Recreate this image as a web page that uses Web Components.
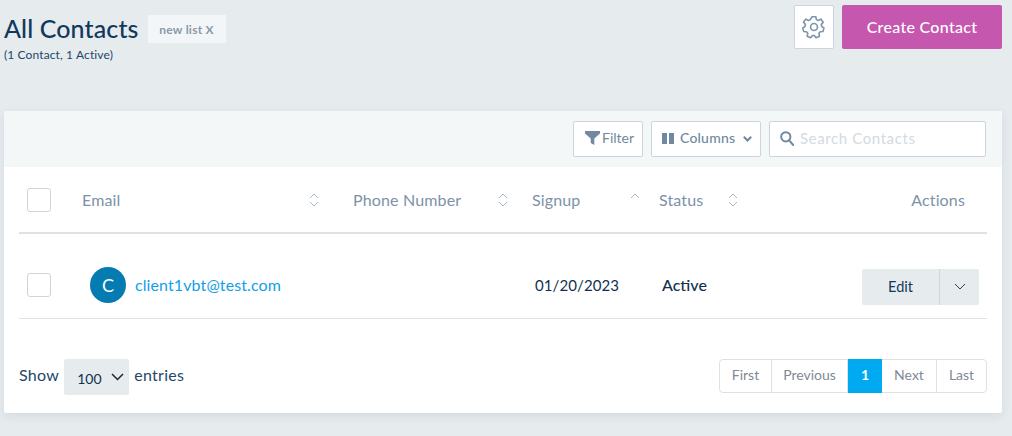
<!DOCTYPE html>
<html>
<head>
<meta charset="utf-8">
<title>All Contacts</title>
<style>
  html, body { margin: 0; height: 100%; }
  body { background: #e6ebee; font-family: "Lato", "Open Sans", sans-serif; overflow: hidden; }
</style>
</head>
<body>
<contacts-page>
  <page-header slot="header"></page-header>
  <contacts-card>
    <contacts-toolbar slot="toolbar"></contacts-toolbar>
    <contacts-table slot="table"></contacts-table>
    <contacts-footer slot="footer"></contacts-footer>
  </contacts-card>
</contacts-page>

<script>
const font = '"Lato", "Open Sans", sans-serif';

class ContactsPage extends HTMLElement {
  constructor() {
    super();
    this.attachShadow({mode: 'open'});
    this.shadowRoot.innerHTML = `
      <style>
        :host { display: block; width: 1012px; height: 436px; box-sizing: border-box; padding: 5px 10px 0 4px; }
      </style>
      <slot name="header"></slot>
      <slot></slot>
    `;
  }
}

class PageHeader extends HTMLElement {
  constructor() {
    super();
    this.attachShadow({mode: 'open'});
    this.shadowRoot.innerHTML = `
      <style>
        :host { display: flex; justify-content: space-between; align-items: flex-start; height: 106px; font-family: ${font}; }
        .title { display: flex; align-items: center; gap: 9px; margin-top: 10px; height: 28px; }
        h1 { margin: 0 0 2px; font-size: 25px; font-weight: 500; color: #12385b; line-height: 26px; letter-spacing: .12px; }
        .badge { width: 78px; height: 28px; display: flex; align-items: center; justify-content: center; background: #f3f6f8; color: #8a99a9; font-size: 12px; font-weight: 700; letter-spacing: .25px; }
        .sub { margin-top: 5px; font-size: 12px; line-height: 14px; color: #23476a; letter-spacing: .12px; }
        .right { display: flex; gap: 8px; }
        .gear { width: 40px; height: 44px; box-sizing: border-box; background: #fff; border: 1px solid #ccd5de; border-radius: 2px; display: flex; align-items: center; justify-content: center; }
        .create { width: 160px; height: 44px; box-sizing: border-box; padding-bottom: 2px; border-radius: 2px; background: #c657af; color: #fff; font-size: 16px; font-weight: 500; letter-spacing: .3px; display: flex; align-items: center; justify-content: center; }
      </style>
      <div>
        <div class="title"><h1>All Contacts</h1><span class="badge">new list X</span></div>
        <div class="sub">(1 Contact, 1 Active)</div>
      </div>
      <div class="right">
        <div class="gear">
          <svg width="26" height="26" viewBox="0 0 24 24" fill="none" stroke="#7f95ab" stroke-width="1.5" stroke-linejoin="round">
            <circle cx="12" cy="12" r="3.2"/>
            <path d="M10.3 2.5h3.4l.5 2.7 1.7.8 2.4-1.3 2.2 2.9-1.7 2 .3 1.9 2.1 1.3-.9 3.4-2.6.2-1.2 1.5.6 2.6-3.2 1.4-1.6-2.1h-1.8l-1.6 2.1-3.2-1.4.6-2.6-1.2-1.5-2.6-.2-.9-3.4 2.1-1.3.3-1.9-1.7-2 2.2-2.9 2.4 1.3 1.7-.8z"/>
          </svg>
        </div>
        <div class="create">Create Contact</div>
      </div>
    `;
  }
}

class ContactsCard extends HTMLElement {
  constructor() {
    super();
    this.attachShadow({mode: 'open'});
    this.shadowRoot.innerHTML = `
      <style>
        :host { display: block; width: 998px; height: 302px; background: #fff; border-radius: 2px; box-shadow: 0 3px 10px rgba(60,80,100,.1); font-family: ${font}; }
      </style>
      <slot name="toolbar"></slot>
      <slot name="table"></slot>
      <slot name="footer"></slot>
    `;
  }
}

class ContactsToolbar extends HTMLElement {
  constructor() {
    super();
    this.attachShadow({mode: 'open'});
    this.shadowRoot.innerHTML = `
      <style>
        :host { display: flex; justify-content: flex-end; align-items: center; gap: 8px; height: 56px; box-sizing: border-box; padding: 0 16px 0 0; background: #f3f7f8; border-radius: 2px 2px 0 0; }
        .box { height: 36px; box-sizing: border-box; background: #fff; border: 1px solid #ccd5de; border-radius: 2px; display: flex; align-items: center; color: #7089a1; font-size: 14px; }
        .box span { margin-top: -3px; }
        .filter { width: 70px; padding-left: 11px; gap: 2px; }
        .columns { width: 110px; padding-left: 10px; font-weight: 500; gap: 6px; letter-spacing: .2px; }
        .search { width: 217px; padding-left: 10px; gap: 6px; color: #d3dae1; font-size: 15px; letter-spacing: .6px; }
        .columns svg { margin-top: -1px; }
        .columns svg:last-child { margin-left: 2px; }
        .filter svg, .search svg { margin-top: -2px; }
      </style>
      <div class="box filter">
        <svg width="15" height="14" viewBox="0 0 15 14"><path fill="#7089a1" d="M0 0h15v2.4L9.3 7.4V14L5.7 12V7.4L0 2.4z"/></svg>
        <span>Filter</span>
      </div>
      <div class="box columns">
        <svg width="12" height="11" viewBox="0 0 12 11"><path fill="#7089a1" d="M0 0h5v11H0zM7 0h5v11H7z"/></svg>
        <span>Columns</span>
        <svg width="9" height="6" viewBox="0 0 9 6"><path fill="none" stroke="#7089a1" stroke-width="2" d="M.8.8l3.7 3.7L8.2.8"/></svg>
      </div>
      <div class="box search">
        <svg width="14" height="15" viewBox="0 0 14 15" fill="none" stroke="#7089a1" stroke-width="2"><circle cx="5.8" cy="5.8" r="4.6"/><path d="M9 9.2l4.2 4.8" stroke-linecap="round"/></svg>
        <span>Search Contacts</span>
      </div>
    `;
  }
}

const sortBoth = `<svg width="10" height="14" viewBox="0 0 10 14" fill="none" stroke="#a9b6c3" stroke-width="1"><path d="M1 5l4-4 4 4M1 9l4 4 4-4"/></svg>`;
const sortUp = `<svg width="10" height="14" viewBox="0 0 10 14" fill="none" stroke="#a9b6c3" stroke-width="1"><path d="M1 5l4-4 4 4"/></svg>`;

class ContactsTable extends HTMLElement {
  constructor() {
    super();
    this.attachShadow({mode: 'open'});
    this.shadowRoot.innerHTML = `
      <style>
        :host { display: block; margin: 0 15px; }
        .row { display: grid; grid-template-columns: 48px 271px 179px 127px 1fr 122px; align-items: center; }
        .head { height: 67px; box-sizing: border-box; border-bottom: 2px solid #dfe1e3; color: #7d92a8; font-size: 16px; letter-spacing: .15px; }
        .body { height: 85px; box-sizing: border-box; padding-top: 17px; border-bottom: 1px solid #dfe1e3; color: #12304f; font-size: 16px; }
        .check { width: 24px; height: 24px; box-sizing: border-box; margin-left: 8px; background: #fff; border: 1px solid #ccd5de; border-radius: 3px; }
        .th { display: flex; justify-content: space-between; align-items: center; padding-left: 15px; }
        .th.email { padding-right: 19px; }
        .th.phone { padding-right: 9px; }
        .th.signup { padding-right: 4px; }
        .th.status { justify-content: flex-start; gap: 25px; }
        .actions-head { text-align: right; padding-right: 22px; }
        .who { display: flex; align-items: center; gap: 9px; padding-left: 23px; }
        .avatar { width: 36px; height: 36px; border-radius: 50%; background: #057cb1; color: #fff; display: flex; align-items: center; justify-content: center; font-size: 18px; }
        a { color: #11a0e8; text-decoration: none; font-size: 16px; letter-spacing: .1px; }
        .date { padding-left: 18px; font-size: 15px; letter-spacing: .1px; }
        .active { padding-left: 18px; font-weight: 500; letter-spacing: 0; }
        .split { display: flex; height: 36px; width: 117px; margin: 4px 0 0 -3px; background: #e6ebee; border-radius: 2px; font-size: 14.5px; color: #12385b; }
        .edit { width: 78px; padding-bottom: 1px; box-sizing: border-box; display: flex; align-items: center; justify-content: center; border-right: 1px solid #d0d6dc; }
        .caret { flex: 1; display: flex; align-items: center; justify-content: center; }
      </style>
      <div class="row head">
        <div class="check"></div>
        <div class="th email"><span>Email</span>${sortBoth}</div>
        <div class="th phone"><span>Phone Number</span>${sortBoth}</div>
        <div class="th signup"><span>Signup</span>${sortUp}</div>
        <div class="th status"><span>Status</span>${sortBoth}</div>
        <div class="actions-head">Actions</div>
      </div>
      <div class="row body">
        <div class="check"></div>
        <div class="who"><span class="avatar">C</span><a>client1vbt@test.com</a></div>
        <div></div>
        <div class="date">01/20/2023</div>
        <div class="active">Active</div>
        <div class="split"><span class="edit">Edit</span><span class="caret"><svg width="12" height="7" viewBox="0 0 12 7" fill="none" stroke="#23476a" stroke-width="1"><path d="M1 1l5 5 5-5"/></svg></span></div>
      </div>
    `;
  }
}

class ContactsFooter extends HTMLElement {
  constructor() {
    super();
    this.attachShadow({mode: 'open'});
    this.shadowRoot.innerHTML = `
      <style>
        :host { display: flex; justify-content: space-between; align-items: flex-start; margin: 40px 15px 0; color: #23476a; font-size: 16px; }
        .show { display: flex; align-items: center; gap: 5px; height: 36px; letter-spacing: .3px; }
        .show > span { margin-top: -5px; }
        .select { width: 65px; height: 36px; box-sizing: border-box; padding: 2px 0 0 13px; background: #e6ebee; border-radius: 2px; display: flex; align-items: center; gap: 9px; color: #12304f; font-size: 14px; letter-spacing: 0; }
        .select svg { margin-top: -3px; }
        .pages { display: flex; height: 34px; box-sizing: border-box; border: 1px solid #dfe1e3; border-radius: 4px; color: #7f8a96; font-size: 14px; }
        .pages span { display: flex; align-items: center; justify-content: center; box-sizing: border-box; border-right: 1px solid #dfe1e3; padding-bottom: 3px; }
        .pages span:last-child { border-right: 0; }
        .pages .on { margin: -1px 0; height: 34px; background: #00aaf0; color: #fff; font-weight: 700; border: 0; }
      </style>
      <div class="show">
        <span>Show</span>
        <div class="select"><span>100</span><svg width="13" height="8" viewBox="0 0 13 8" fill="none" stroke="#1c2733" stroke-width="1.5"><path d="M1 1l5.5 5.5L12 1"/></svg></div>
        <span>entries</span>
      </div>
      <div class="pages">
        <span style="width:52px">First</span>
        <span style="width:76px">Previous</span>
        <span class="on" style="width:34px">1</span>
        <span style="width:55px">Next</span>
        <span style="width:49px">Last</span>
      </div>
    `;
  }
}

customElements.define('contacts-page', ContactsPage);
customElements.define('page-header', PageHeader);
customElements.define('contacts-card', ContactsCard);
customElements.define('contacts-toolbar', ContactsToolbar);
customElements.define('contacts-table', ContactsTable);
customElements.define('contacts-footer', ContactsFooter);
</script>
</body>
</html>
